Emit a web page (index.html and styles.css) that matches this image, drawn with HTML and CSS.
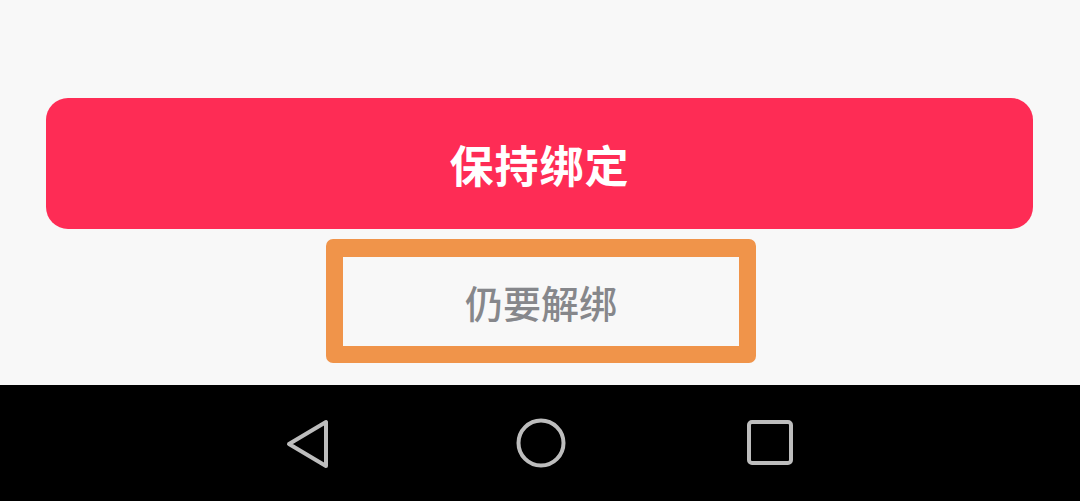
FILE: index.html
```html
<!DOCTYPE html>
<html lang="zh-CN">
<head>
<meta charset="utf-8">
<link rel="stylesheet" href="styles.css">
</head>
<body>
<div class="screen">
  <main class="content">
    <button class="btn-keep">保持绑定</button>
    <div class="highlight">
      <button class="btn-unbind">仍要解绑</button>
    </div>
  </main>
  <nav class="navbar">
    <svg class="nav-icon nav-back" width="46" height="52" viewBox="0 0 46 52">
      <path d="M41 4 L41 48 L4 26 Z" fill="none" stroke="#bdbdbd" stroke-width="4" stroke-linejoin="round"/>
    </svg>
    <svg class="nav-icon nav-home" width="52" height="52" viewBox="0 0 52 52">
      <circle cx="26" cy="26" r="22.5" fill="none" stroke="#bdbdbd" stroke-width="4"/>
    </svg>
    <svg class="nav-icon nav-recent" width="48" height="48" viewBox="0 0 48 48">
      <rect x="3" y="3" width="42" height="41" rx="3" fill="none" stroke="#bdbdbd" stroke-width="4"/>
    </svg>
  </nav>
</div>
</body>
</html>
```

FILE: styles.css
```css
* { box-sizing: border-box; }
html, body { margin: 0; padding: 0; }
body {
  width: 1080px;
  height: 501px;
  overflow: hidden;
  font-family: "Noto Sans CJK SC", "Noto Sans", sans-serif;
  background: #f8f8f8;
}
.screen {
  display: flex;
  flex-direction: column;
  height: 501px;
}
.content {
  height: 385px;
  background: #f8f8f8;
  padding: 98px 47px 0 46px;
  display: flex;
  flex-direction: column;
}
.btn-keep {
  width: 100%;
  height: 131px;
  border: none;
  border-radius: 22px;
  background: #fe2c55;
  color: #ffffff;
  font-family: inherit;
  font-size: 44px;
  font-weight: 700;
  letter-spacing: 1px;
  padding: 0;
}
.highlight {
  margin-top: 10px;
  margin-left: 280px;
  width: 430px;
  height: 124px;
  border: 17px solid #f0944a;
  border-top-width: 18px;
  border-radius: 7px;
  display: flex;
}
.btn-unbind {
  flex: 1;
  border: none;
  background: #f8f8f8;
  color: #86878b;
  font-family: inherit;
  font-size: 38px;
  font-weight: 500;
  padding: 0;
}
.navbar {
  flex: 1;
  background: #000000;
  display: flex;
  align-items: center;
  padding-left: 285px;
}
.nav-icon { display: block; }
.nav-back { margin-top: 2px; }
.nav-home { margin-left: 183.5px; }
.nav-recent { margin-left: 179.5px; }
```
